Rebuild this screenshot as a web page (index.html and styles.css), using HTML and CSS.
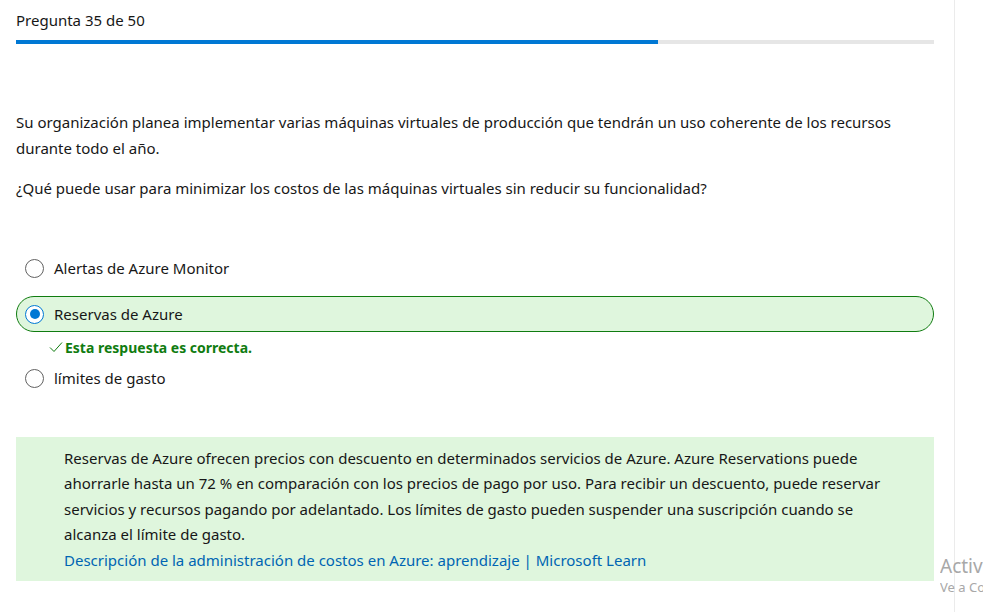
FILE: index.html
```html
<!DOCTYPE html>
<html lang="es">
<head>
<meta charset="utf-8">
<title>Pregunta 35 de 50</title>
<link rel="stylesheet" href="styles.css">
</head>
<body>
<div class="page">
  <main class="main">
    <div class="counter">Pregunta 35 de 50</div>
    <div class="progress"><div class="progress-fill" style="width:69.9%"></div></div>

    <p class="q">Su organización planea implementar varias máquinas virtuales de producción que tendrán un uso coherente de los recursos durante todo el año.</p>
    <p class="q q2">¿Qué puede usar para minimizar los costos de las máquinas virtuales sin reducir su funcionalidad?</p>

    <div class="options">
      <div class="option"><span class="radio"></span><span>Alertas de Azure Monitor</span></div>
      <div class="option option-correct"><span class="radio radio-on"></span><span>Reservas de Azure</span></div>
      <div class="feedback"><svg class="check" viewBox="0 0 14 12" width="14" height="12"><path d="M1 6.5 L5 10.5 L13 1.5" fill="none" stroke="#107c10" stroke-width="1"/></svg><span>Esta respuesta es correcta.</span></div>
      <div class="option"><span class="radio"></span><span>límites de gasto</span></div>
    </div>

    <div class="explain">
      <p>Reservas de Azure ofrecen precios con descuento en determinados servicios de Azure. Azure Reservations puede ahorrarle hasta un 72 % en comparación con los precios de pago por uso. Para recibir un descuento, puede reservar servicios y recursos pagando por adelantado. Los límites de gasto pueden suspender una suscripción cuando se alcanza el límite de gasto.</p>
      <a class="link" href="#">Descripción de la administración de costos en Azure: aprendizaje | Microsoft Learn</a>
    </div>
  </main>
  <aside class="gutter"></aside>
</div>
<div class="watermark">
  <div class="wm1">Activar Windows</div>
  <div class="wm2">Ve a Configuración para activar Windows.</div>
</div>
</body>
</html>
```

FILE: styles.css
```css
html, body {
  margin: 0;
  padding: 0;
  background: #ffffff;
  overflow: hidden;
}
body {
  font-family: "Noto Sans", "Open Sans", sans-serif;
  color: #171717;
  width: 983px;
  height: 612px;
  position: relative;
}
.page {
  display: flex;
  height: 612px;
}
.main {
  width: 918px;
  padding: 0 20px 0 16px;
  border-right: 1px solid #ebebeb;
}
.gutter {
  flex: 1;
}
.counter {
  font-size: 15px;
  line-height: 20px;
  padding-top: 10px;
  height: 20px;
}
.progress {
  margin-top: 10px;
  height: 4px;
  background: #e6e6e6;
}
.progress-fill {
  height: 4px;
  background: #0078d4;
}
.q {
  font-size: 15px;
  line-height: 26px;
  margin: 65px 0 0 0;
}
.q2 {
  margin-top: 14px;
}
.options {
  margin-top: 49px;
  display: flex;
  flex-direction: column;
}
.option {
  display: flex;
  align-items: center;
  gap: 10px;
  height: 36px;
  padding: 0 8px;
  font-size: 15px;
  border: 1px solid transparent;
  border-radius: 18px;
  box-sizing: border-box;
}
.option-correct {
  margin-top: 10px;
  background: #dff6dd;
  border-color: #107c10;
}
.radio {
  width: 19px;
  height: 19px;
  border: 1px solid #616161;
  border-radius: 50%;
  background: #fff;
  box-sizing: border-box;
  flex: none;
}
.radio-on {
  border-color: #0078d4;
  position: relative;
}
.radio-on::after {
  content: "";
  position: absolute;
  left: 3.5px;
  top: 3.5px;
  width: 10px;
  height: 10px;
  border-radius: 50%;
  background: #0078d4;
}
.feedback {
  display: flex;
  align-items: center;
  height: 26px;
  margin-top: 2px;
  padding-left: 33px;
  color: #107c10;
  font-weight: 700;
  font-size: 14px;
}
.check {
  margin-right: 2px;
}
.explain {
  margin-top: 41px;
  background: #dff6dd;
  padding: 9px 48px 8px 48px;
  font-size: 15px;
  line-height: 25.4px;
}
.explain p {
  margin: 0;
}
.link {
  color: #0065b3;
  text-decoration: none;
}
.watermark {
  position: absolute;
  left: 940px;
  top: 554px;
  width: 43px;
  overflow: hidden;
  color: #a8a8a8;
  white-space: nowrap;
}
.wm1 {
  font-size: 19px;
  line-height: 24px;
}
.wm2 {
  font-size: 13px;
  line-height: 18px;
}
```
